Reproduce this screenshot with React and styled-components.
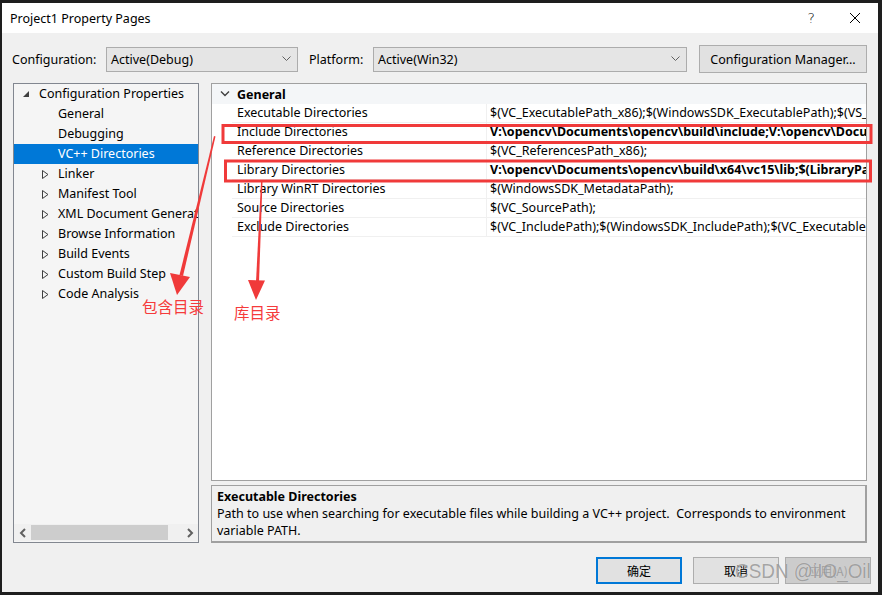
import React from "react";
import styled, { createGlobalStyle } from "styled-components";

const GlobalStyle = createGlobalStyle`
  html, body {
    margin: 0;
    padding: 0;
    background: #1e1e1e;
  }
  body {
    width: 882px;
    height: 595px;
    overflow: hidden;
    position: relative;
    font-family: "Noto Sans", "Noto Sans CJK SC", sans-serif;
    font-size: 12px;
    color: #000;
  }
`;

const UI = `"Noto Sans", "Noto Sans CJK SC", sans-serif`;
const CJK = `"Noto Sans CJK SC", sans-serif`;

const treeItems = [
  { label: "Configuration Properties", level: 0, open: true },
  { label: "General", level: 1 },
  { label: "Debugging", level: 1 },
  { label: "VC++ Directories", level: 1, selected: true },
  { label: "Linker", level: 1, collapsed: true },
  { label: "Manifest Tool", level: 1, collapsed: true },
  { label: "XML Document Generator", level: 1, collapsed: true },
  { label: "Browse Information", level: 1, collapsed: true },
  { label: "Build Events", level: 1, collapsed: true },
  { label: "Custom Build Step", level: 1, collapsed: true },
  { label: "Code Analysis", level: 1, collapsed: true },
];

const rows = [
  {
    name: "Executable Directories",
    value:
      "$(VC_ExecutablePath_x86);$(WindowsSDK_ExecutablePath);$(VS_ExecutablePath);$(MSBuild_ExecutablePath);$(PATH);",
  },
  {
    name: "Include Directories",
    value:
      "V:\\opencv\\Documents\\opencv\\build\\include;V:\\opencv\\Documents\\opencv\\build\\include\\opencv2;$(IncludePath)",
    bold: true,
  },
  { name: "Reference Directories", value: "$(VC_ReferencesPath_x86);" },
  {
    name: "Library Directories",
    value: "V:\\opencv\\Documents\\opencv\\build\\x64\\vc15\\lib;$(LibraryPath)",
    bold: true,
  },
  { name: "Library WinRT Directories", value: "$(WindowsSDK_MetadataPath);" },
  { name: "Source Directories", value: "$(VC_SourcePath);" },
  {
    name: "Exclude Directories",
    value:
      "$(VC_IncludePath);$(WindowsSDK_IncludePath);$(VC_ExecutablePath_x86);$(VC_LibraryPath_x86);",
  },
];

export default function App() {
  return (
    <>
      <GlobalStyle />
      <Window>
        <TitleBar>
          <Title>Project1 Property Pages</Title>
          <TitleButtons>
            <HelpMark>?</HelpMark>
            <svg width="12" height="12" viewBox="0 0 12 12">
              <path d="M1 1 L11 11 M11 1 L1 11" stroke="#000" strokeWidth="1" />
            </svg>
          </TitleButtons>
        </TitleBar>

        <Body>
          <ConfigRow>
            <Label>Configuration:</Label>
            <Combo $width={192}>
              <span>Active(Debug)</span>
              <Chevron />
            </Combo>
            <Label $ml={11}>Platform:</Label>
            <Combo $width={314}>
              <span>Active(Win32)</span>
              <Chevron />
            </Combo>
            <ManagerButton>Configuration Manager...</ManagerButton>
          </ConfigRow>

          <Main>
            <TreePanel>
              <TreeList>
                {treeItems.map((item) => (
                  <TreeRow key={item.label} $selected={item.selected}>
                    <Expander $level={item.level}>
                      {item.open && (
                        <svg width="7" height="7" viewBox="0 0 7 7">
                          <polygon points="6,0 6,6 0,6" fill="#404040" />
                        </svg>
                      )}
                      {item.collapsed && (
                        <svg width="7" height="9" viewBox="0 0 7 9">
                          <polygon
                            points="0.5,0.5 6,4.5 0.5,8.5"
                            fill="none"
                            stroke="#404040"
                            strokeWidth="1"
                          />
                        </svg>
                      )}
                    </Expander>
                    <TreeLabel>{item.label}</TreeLabel>
                  </TreeRow>
                ))}
              </TreeList>
              <HScroll>
                <ScrollArrow>
                  <svg width="8" height="10" viewBox="0 0 8 10">
                    <path d="M6 1 L2 5 L6 9" fill="none" stroke="#606060" strokeWidth="2" />
                  </svg>
                </ScrollArrow>
                <ScrollTrack>
                  <ScrollThumb />
                </ScrollTrack>
                <ScrollArrow>
                  <svg width="8" height="10" viewBox="0 0 8 10">
                    <path d="M2 1 L6 5 L2 9" fill="none" stroke="#606060" strokeWidth="2" />
                  </svg>
                </ScrollArrow>
              </HScroll>
            </TreePanel>

            <RightColumn>
              <Grid>
                <GroupHeader>
                  <GroupToggle>
                    <svg width="10" height="6" viewBox="0 0 10 6">
                      <path d="M1 0.5 L5 4.5 L9 0.5" fill="none" stroke="#404040" strokeWidth="1.4" />
                    </svg>
                  </GroupToggle>
                  <GroupTitle>General</GroupTitle>
                </GroupHeader>
                {rows.map((r) => (
                  <PropRow key={r.name}>
                    <Margin />
                    <NameCell>{r.name}</NameCell>
                    <ValueCell $bold={r.bold}>{r.value}</ValueCell>
                  </PropRow>
                ))}
              </Grid>
              <Description>
                <DescTitle>Executable Directories</DescTitle>
                <DescText>
                  Path to use when searching for executable files while building a VC++
                  project.&nbsp; Corresponds to environment
                  <br />
                  variable PATH.
                </DescText>
              </Description>
            </RightColumn>
          </Main>

          <ButtonRow>
            <DialogButton $primary>确定</DialogButton>
            <DialogButton>取消</DialogButton>
            <DialogButton $disabled>应用(A)</DialogButton>
          </ButtonRow>
        </Body>
      </Window>

      <Annotations>
        <svg width="882" height="595" viewBox="0 0 882 595">
          <rect x="223" y="125.5" width="648" height="17" fill="none" stroke="#f03a3a" strokeWidth="3" />
          <rect x="225.5" y="161" width="645" height="20" fill="none" stroke="#f03a3a" strokeWidth="3" />
          <polygon points="214,136 215.5,136.5 183,276 179.5,275" fill="#f03a3a" />
          <polygon points="177,295 170,273 190,277" fill="#f03a3a" />
          <polygon points="261,182 262.5,182 259,282 256,282" fill="#f03a3a" />
          <polygon points="256,300 248,280 265,280.5" fill="#f03a3a" />
        </svg>
        <Note $x={142} $y={296}>包含目录</Note>
        <Note $x={234} $y={302}>库目录</Note>
        <Watermark>CSDN @iIO_Oil</Watermark>
      </Annotations>
    </>
  );
}

function Chevron() {
  return (
    <svg width="9" height="6" viewBox="0 0 9 6">
      <path d="M0.5 0.5 L4.5 4.5 L8.5 0.5" fill="none" stroke="#606060" strokeWidth="1" />
    </svg>
  );
}

const Window = styled.div`
  position: absolute;
  left: 2px;
  top: 3px;
  width: 876px;
  height: 589px;
  display: flex;
  flex-direction: column;
  background: #f0f0f0;
  font-family: ${UI};
`;

const TitleBar = styled.div`
  height: 30px;
  flex: none;
  background: #ffffff;
  display: flex;
  align-items: center;
  justify-content: space-between;
  padding: 0 17px 0 8px;
`;

const Title = styled.div`
  font-size: 12.5px;
  color: #000;
`;

const TitleButtons = styled.div`
  display: flex;
  align-items: center;
  gap: 34px;
`;

const HelpMark = styled.span`
  font-size: 14px;
  font-family: "DejaVu Sans", sans-serif;
  font-weight: 300;
`;

const Body = styled.div`
  flex: 1;
  display: flex;
  flex-direction: column;
  padding: 12px 7px 8px 10px;
`;

const ConfigRow = styled.div`
  height: 28px;
  display: flex;
  align-items: center;
`;

const Label = styled.span`
  margin-left: ${(p) => p.$ml || 0}px;
  width: ${(p) => (p.$ml ? 64 : 94)}px;
  font-size: 12.5px;
`;

const Combo = styled.div`
  width: ${(p) => p.$width}px;
  height: 25px;
  box-sizing: border-box;
  border: 1px solid #acacac;
  background: #e5e5e5;
  display: flex;
  align-items: center;
  justify-content: space-between;
  padding: 0 6px 0 4px;
  font-size: 12.5px;
`;

const ManagerButton = styled.div`
  margin-left: 12px;
  width: 168px;
  height: 28px;
  box-sizing: border-box;
  border: 1px solid #adadad;
  background: #e1e1e1;
  display: flex;
  align-items: center;
  justify-content: center;
  font-size: 12.5px;
`;

const Main = styled.div`
  margin-top: 10px;
  height: 460px;
  display: flex;
  gap: 12px;
  padding-left: 1px;
`;

const TreePanel = styled.div`
  width: 186px;
  box-sizing: border-box;
  border: 1px solid #828790;
  background: #f5f5f5;
  display: flex;
  flex-direction: column;
`;

const TreeList = styled.div`
  flex: 1;
  overflow: hidden;
`;

const TreeRow = styled.div`
  height: 20px;
  display: flex;
  align-items: center;
  white-space: nowrap;
  background: ${(p) => (p.$selected ? "#0078d7" : "transparent")};
  color: ${(p) => (p.$selected ? "#fff" : "#000")};
`;

const Expander = styled.span`
  width: ${(p) => (p.$level === 0 ? 25 : 44)}px;
  flex: none;
  display: flex;
  justify-content: flex-end;
  padding-right: 9px;
  box-sizing: border-box;
`;

const TreeLabel = styled.span`
  font-size: 12.5px;
  padding-bottom: 2px;
`;

const HScroll = styled.div`
  height: 17px;
  display: flex;
  align-items: center;
  background: #f0f0f0;
  margin-bottom: 1px;
`;

const ScrollArrow = styled.div`
  width: 17px;
  height: 17px;
  display: flex;
  align-items: center;
  justify-content: center;
`;

const ScrollTrack = styled.div`
  flex: 1;
  height: 15px;
  display: flex;
  align-items: center;
`;

const ScrollThumb = styled.div`
  width: 137px;
  height: 15px;
  background: #cdcdcd;
`;

const RightColumn = styled.div`
  width: 656px;
  display: flex;
  flex-direction: column;
  gap: 4px;
`;

const Grid = styled.div`
  height: 398px;
  box-sizing: border-box;
  border: 1px solid #a0a0a0;
  background: #fff;
  overflow: hidden;
`;

const GroupHeader = styled.div`
  height: 20px;
  display: flex;
  align-items: center;
  background: #f4f6f8;
`;

const GroupToggle = styled.span`
  width: 25px;
  display: flex;
  justify-content: center;
`;

const GroupTitle = styled.span`
  font-weight: 700;
  font-size: 12.5px;
`;

const PropRow = styled.div`
  height: 19px;
  display: grid;
  grid-template-columns: 20px 255px 1fr;
`;

const Margin = styled.div``;

const NameCell = styled.div`
  border-bottom: 1px solid #f0f0f0;
  border-right: 1px solid #f0f0f0;
  padding-left: 5px;
  line-height: 18px;
  font-size: 12.5px;
  white-space: nowrap;
  overflow: hidden;
`;

const ValueCell = styled.div`
  border-bottom: 1px solid #f0f0f0;
  padding-left: 3px;
  line-height: 18px;
  font-size: 12.5px;
  font-weight: ${(p) => (p.$bold ? 700 : 400)};
  white-space: nowrap;
  overflow: hidden;
`;

const Description = styled.div`
  flex: 1;
  box-sizing: border-box;
  border: 1px solid #a0a0a0;
  border-right-width: 2px;
  border-bottom-width: 2px;
  background: #f0f0f0;
  padding: 2px 5px;
`;

const DescTitle = styled.div`
  font-weight: 700;
  font-size: 12.5px;
  line-height: 17px;
`;

const DescText = styled.div`
  font-size: 12.5px;
  line-height: 17px;
`;

const ButtonRow = styled.div`
  margin-top: 14px;
  display: flex;
  justify-content: flex-end;
  gap: 11px;
`;

const DialogButton = styled.div`
  width: 86px;
  height: 27px;
  box-sizing: border-box;
  border: ${(p) => (p.$primary ? "2px solid #0078d7" : "1px solid #adadad")};
  background: ${(p) => (p.$disabled ? "#cccccc" : "#e1e1e1")};
  color: ${(p) => (p.$disabled ? "#a0a0a0" : "#000")};
  display: flex;
  align-items: center;
  justify-content: center;
  font-family: ${CJK};
  font-size: 12px;
  &:last-child {
    margin-left: -5px;
  }
`;

const Annotations = styled.div`
  position: absolute;
  inset: 0;
  pointer-events: none;
  svg {
    position: absolute;
    left: 0;
    top: 0;
  }
`;

const Note = styled.span`
  position: absolute;
  left: ${(p) => p.$x}px;
  top: ${(p) => p.$y}px;
  color: #f53b3b;
  font-family: ${CJK};
  font-size: 15.5px;
  line-height: 20px;
  white-space: nowrap;
`;

const Watermark = styled.span`
  position: absolute;
  left: 735px;
  top: 559px;
  font-family: "Liberation Sans", sans-serif;
  font-size: 21px;
  line-height: 24px;
  white-space: nowrap;
  color: rgba(130, 130, 130, 0.7);
  text-shadow: 0 0 1px rgba(255, 255, 255, 0.6);
  transform: scaleX(0.9);
  transform-origin: left center;
`;
